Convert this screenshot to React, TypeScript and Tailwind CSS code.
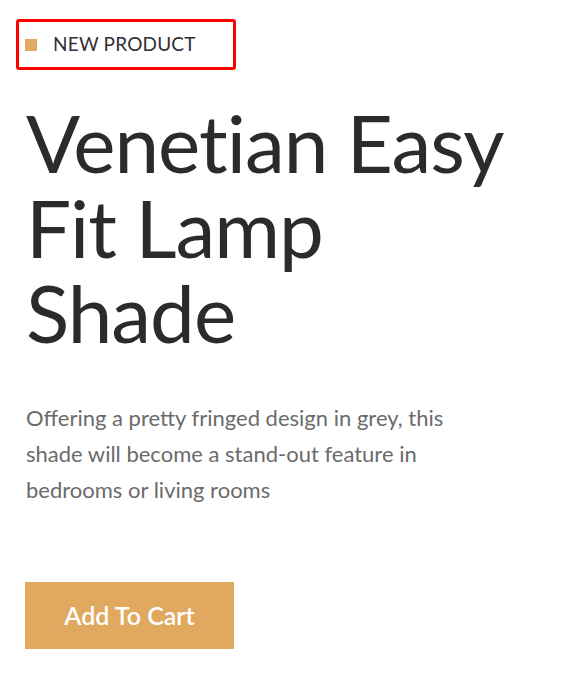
import React from 'react';

const App: React.FC = () => {
  return (
    <div className="min-h-[679px] w-full bg-white font-['Lato','Liberation_Sans',sans-serif] pt-[19px] pl-[16px]">
      <div className="flex items-center w-[220px] h-[51px] border-[3px] border-[#ff0000] rounded-[3px] pl-[6px]">
        <span className="block w-[12px] h-[12px] bg-[#e0aa62]" />
        <span className="ml-[16px] text-[19px] uppercase text-[#2f2f36] tracking-[0.2px]">New Product</span>
      </div>

      <div className="pl-[10px] pr-[26px]">
        <h1 className="mt-[30px] text-[80px] leading-[85px] font-normal text-[#2b2b2b] tracking-[-1px]">
          Venetian Easy
          <br />
          Fit Lamp
          <br />
          Shade
        </h1>

        <p className="mt-[45px] text-[22px] leading-[36px] text-[#6b6b6b]">
          Offering a pretty fringed design in grey, this
          <br />
          shade will become a stand-out feature in
          <br />
          bedrooms or living rooms
        </p>

        <button className="mt-[74px] -ml-[1px] w-[209px] h-[67px] bg-[#e0a95f] text-white text-[25px] font-semibold">
          Add To Cart
        </button>
      </div>
    </div>
  );
};

export default App;
